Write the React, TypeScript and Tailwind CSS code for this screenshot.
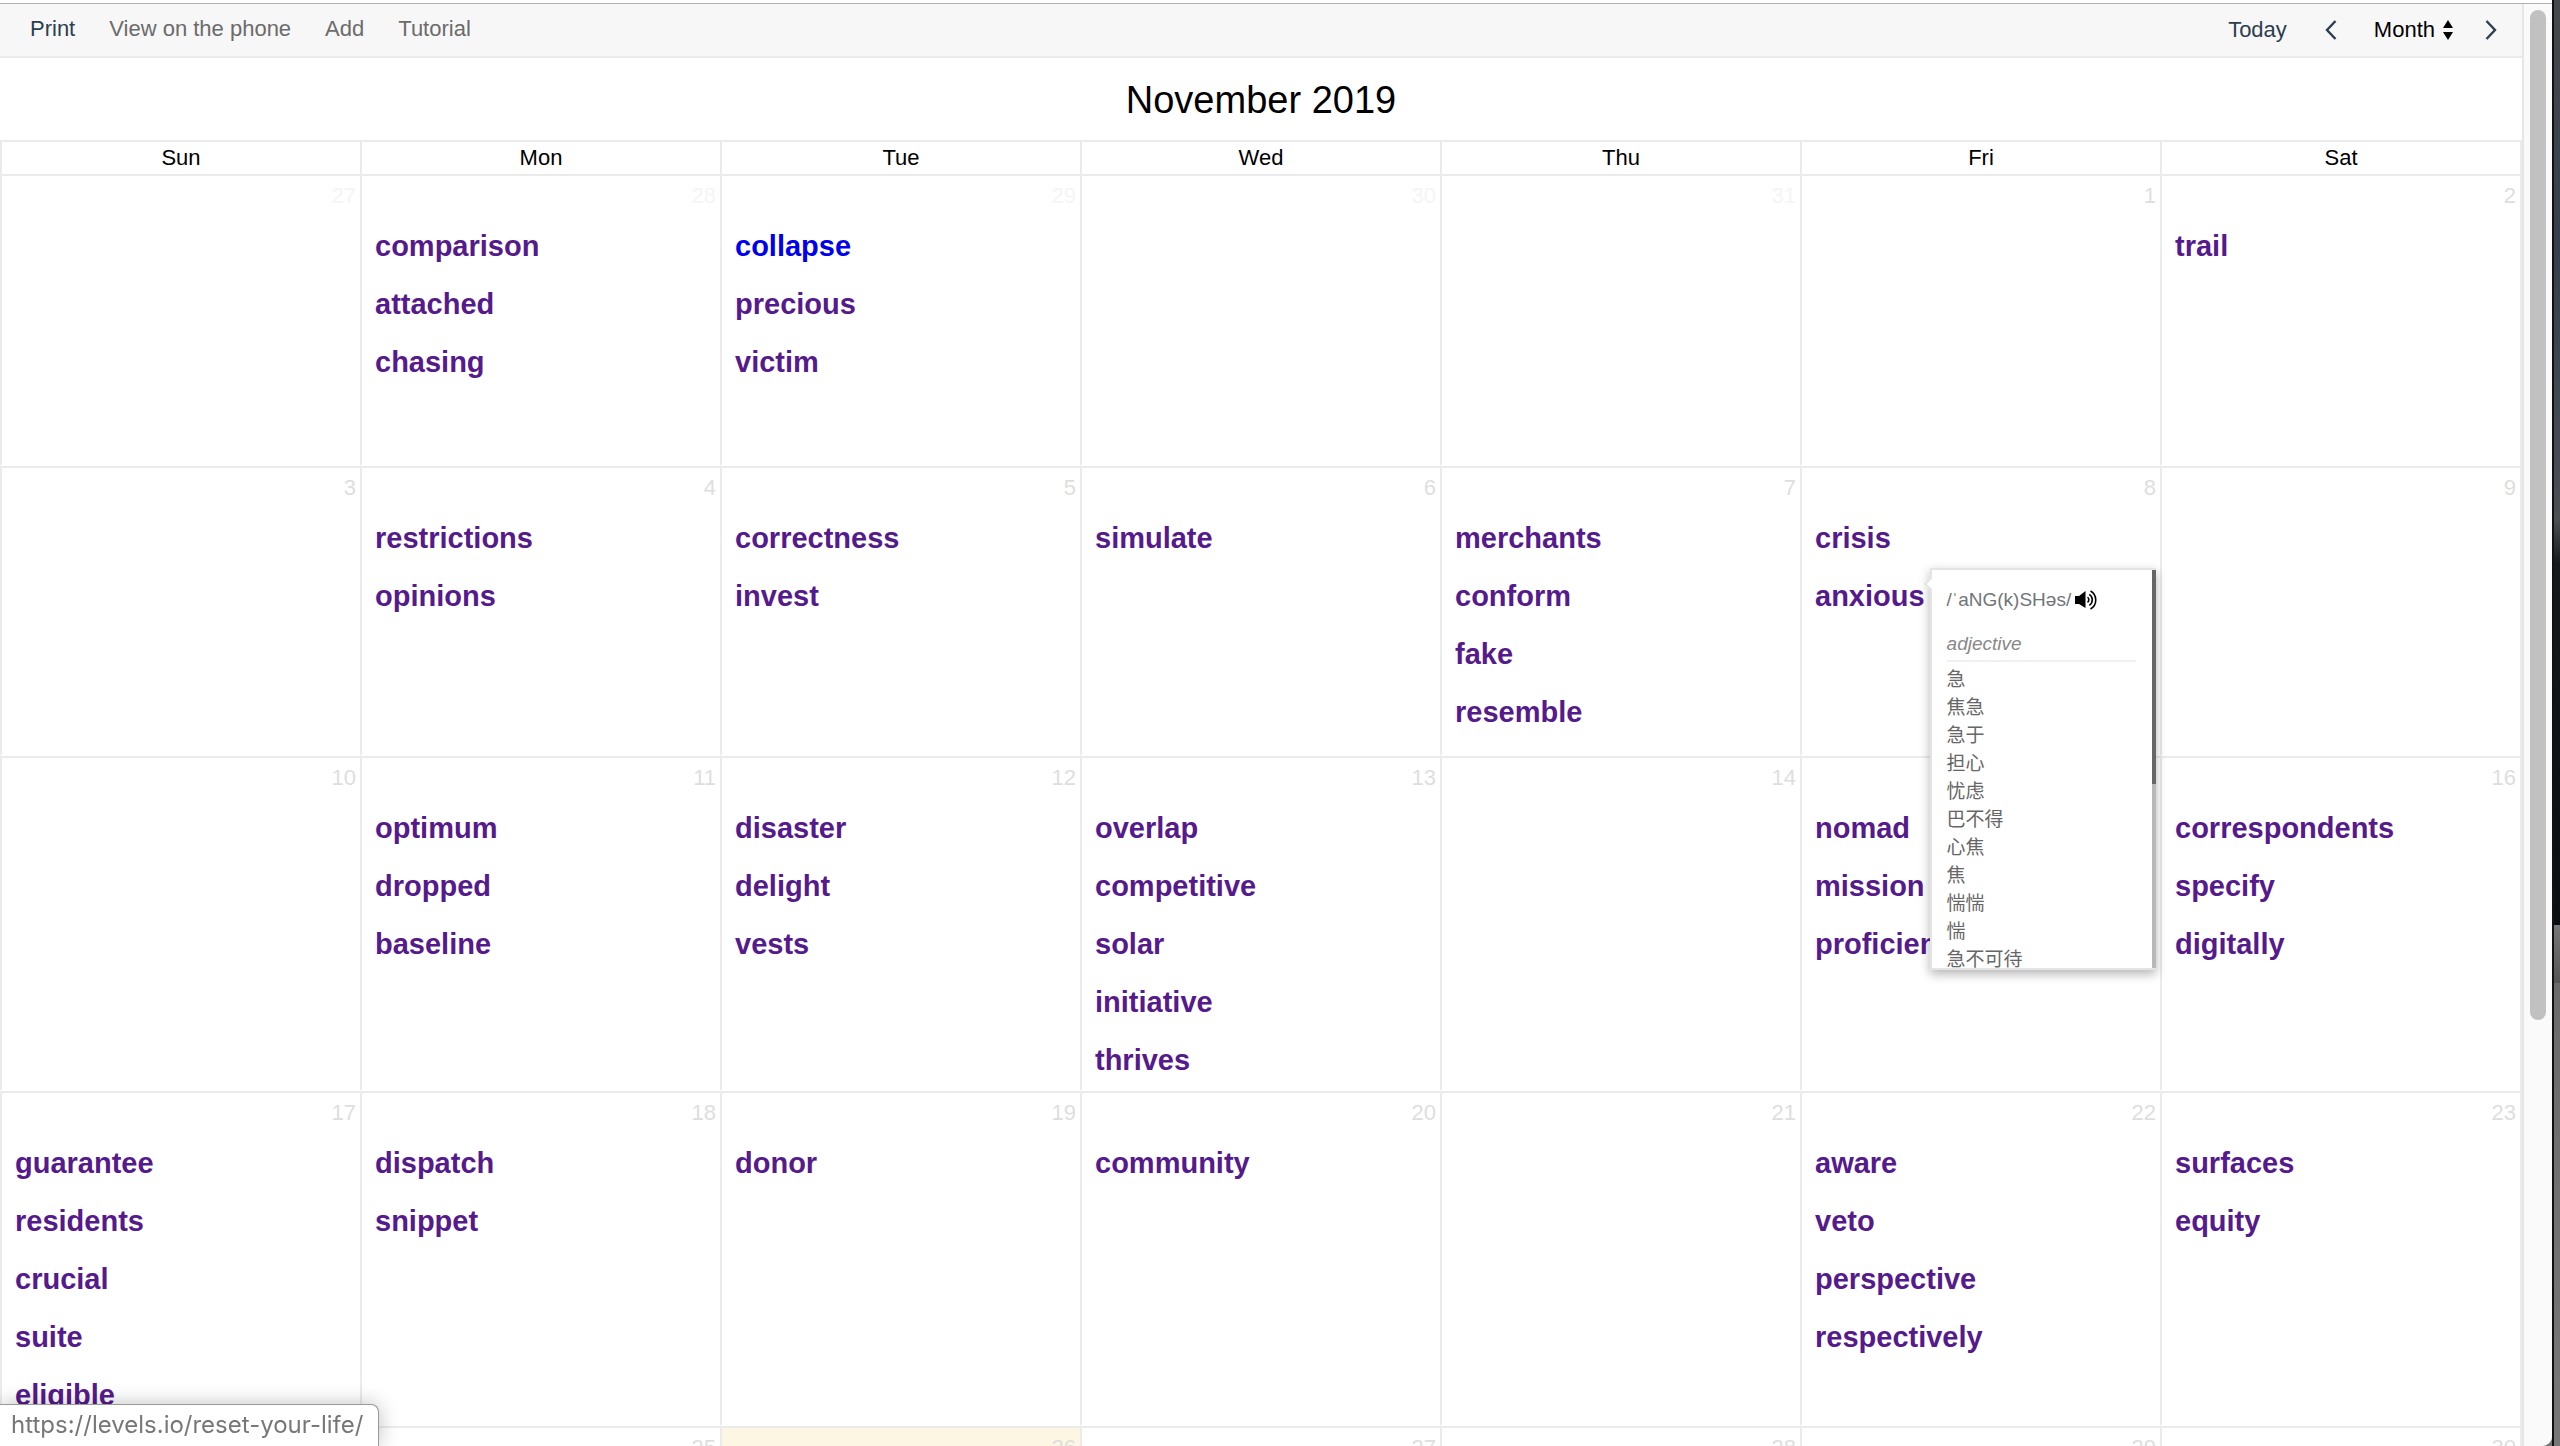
import clsx from "clsx";
import { useState } from "react";

type Day = { date: number; words?: string[]; muted?: boolean; today?: boolean };

const WEEKDAYS = ["Sun", "Mon", "Tue", "Wed", "Thu", "Fri", "Sat"];

const WEEKS: Day[][] = [
  [
    { date: 27, muted: true },
    { date: 28, muted: true, words: ["comparison", "attached", "chasing"] },
    { date: 29, muted: true, words: ["collapse", "precious", "victim"] },
    { date: 30, muted: true },
    { date: 31, muted: true },
    { date: 1 },
    { date: 2, words: ["trail"] },
  ],
  [
    { date: 3 },
    { date: 4, words: ["restrictions", "opinions"] },
    { date: 5, words: ["correctness", "invest"] },
    { date: 6, words: ["simulate"] },
    { date: 7, words: ["merchants", "conform", "fake", "resemble"] },
    { date: 8, words: ["crisis", "anxious"] },
    { date: 9 },
  ],
  [
    { date: 10 },
    { date: 11, words: ["optimum", "dropped", "baseline"] },
    { date: 12, words: ["disaster", "delight", "vests"] },
    { date: 13, words: ["overlap", "competitive", "solar", "initiative", "thrives"] },
    { date: 14 },
    { date: 15, words: ["nomad", "mission", "proficiency"] },
    { date: 16, words: ["correspondents", "specify", "digitally"] },
  ],
  [
    { date: 17, words: ["guarantee", "residents", "crucial", "suite", "eligible"] },
    { date: 18, words: ["dispatch", "snippet"] },
    { date: 19, words: ["donor"] },
    { date: 20, words: ["community"] },
    { date: 21 },
    { date: 22, words: ["aware", "veto", "perspective", "respectively"] },
    { date: 23, words: ["surfaces", "equity"] },
  ],
  [
    { date: 24 },
    { date: 25 },
    { date: 26, today: true },
    { date: 27 },
    { date: 28 },
    { date: 29 },
    { date: 30 },
  ],
];

const UNREAD = "collapse";
const ACTIVE = "anxious";

const MEANINGS = ["急", "焦急", "急于", "担心", "忧虑", "巴不得", "心焦", "焦", "惴惴", "惴", "急不可待"];

function Chevron({ d }: { d: string }) {
  return (
    <svg viewBox="0 0 12 20" className="h-5 w-3" fill="none" stroke="#2c3e50" strokeWidth="2.4">
      <path d={d} />
    </svg>
  );
}

function Toolbar() {
  const [view, setView] = useState("Month");
  return (
    <header className="flex h-[54px] items-center justify-between border-b-2 border-[#ebebeb] bg-[#f7f7f7] pr-[25px] pl-[30px] text-[22px] leading-7">
      <nav className="flex gap-[34px] pb-[2px] text-[#6b6b6b]">
        <button className="text-[#2c3e50]">Print</button>
        <a href="#phone">View on the phone</a>
        <a href="#add">Add</a>
        <a href="#tutorial">Tutorial</a>
      </nav>
      <div className="flex items-center text-[#2c3e50]">
        <button className="mr-[38px]">Today</button>
        <button aria-label="Previous" className="mr-[37px]">
          <Chevron d="M10.5 1 2 10l8.500 9" />
        </button>
        <label className="mr-8 flex items-center gap-2 text-black">
          <select
            aria-label="View"
            value={view}
            onChange={(e) => setView(e.target.value)}
            className="field-sizing-content appearance-none bg-transparent"
          >
            <option>Month</option>
            <option>Week</option>
            <option>Day</option>
          </select>
          <svg viewBox="0 0 10 20" className="h-5 w-[10px]">
            <path d="M5 0l5 8H0zM5 20l5-8H0z" />
          </svg>
        </label>
        <button aria-label="Next">
          <Chevron d="M1.500 1 10 10l-8.500 9" />
        </button>
      </div>
    </header>
  );
}

function SpeakerIcon() {
  return (
    <svg viewBox="0 0 22 20" className="h-5 w-[22px]" fill="none" stroke="#000" strokeWidth="1.600">
      <path d="M0 6h4l6.500-5v17L4 14H0z" fill="#000" stroke="none" />
      <path d="M12.500 7.200c1.800 1.200 1.800 4 0 5.200M14.300 4.300c4 2.600 4 8.300 0 11M15.500 1c7 4 7 14 0 18" />
    </svg>
  );
}

function WordPopup() {
  return (
    <div className="absolute -top-[10px] left-full z-10 ml-[5px]">
      <div className="absolute top-[11px] -left-[4px] z-10 size-[10px] rotate-45 border-b-2 border-l-2 border-[#e4e4e4] bg-white" />
      <div className="relative flex h-[402px] w-[226px] overflow-hidden border-y-2 border-l-2 border-[#e4e4e4] bg-white shadow-[0_4px_10px_rgba(0,0,0,0.3)]">
        <div className="flex-1 pt-[18px] pr-4 pl-[15px] text-[19px] font-normal text-[#707579]">
          <div className="flex items-center gap-1 whitespace-nowrap">
            <span className="leading-6">/ˈaNG(k)SHəs/</span>
            <button aria-label="Listen">
              <SpeakerIcon />
            </button>
          </div>
          <p className="mt-5 border-b-2 border-[#f0f0f0] pb-1 leading-6 text-[#888] italic">adjective</p>
          <ul className="mt-1 leading-7 text-[#666]">
            {MEANINGS.map((m) => (
              <li key={m} className="whitespace-nowrap">{m}</li>
            ))}
          </ul>
        </div>
        <div className="-my-[2px] w-1 bg-[#b8b8b8]">
          <div className="h-[216px] bg-[#666]" />
        </div>
      </div>
    </div>
  );
}

function DayCell({ day }: { day: Day }) {
  return (
    <td
      className={clsx(
        "h-[290px] border-t-2 border-b-2 border-l-2 border-[#ebebeb] border-b-white p-0 align-top",
        day.today && "bg-[#fdf6e3]"
      )}
    >
      <div
        className={clsx(
          "h-[41px] pt-[6px] pr-1 text-right text-[22px] leading-7",
          day.muted ? "text-[#f5f5f5]" : "text-[#dedede]"
        )}
      >
        {day.date}
      </div>
      <ul className="pl-[13px]">
        {day.words?.map((word) => (
          <li key={word} className="flex h-[58px] items-center text-[29px] leading-9 font-bold">
            <div className="relative">
              <a href={`#${word}`} className={word === UNREAD ? "text-[#0000ee]" : "text-[#551a8b]"}>
                {word}
              </a>
              {word === ACTIVE && <WordPopup />}
            </div>
          </li>
        ))}
      </ul>
    </td>
  );
}

export default function App() {
  return (
    <div className="flex h-screen overflow-hidden bg-[#777] font-['Liberation_Sans','Noto_Sans_CJK_SC',sans-serif]">
      <div className="flex min-w-0 flex-1 flex-col overflow-hidden rounded-br-[10px] bg-white">
        <div className="h-1 shrink-0 border-b border-[#b0b0b0]" />
        <div className="flex min-h-0 flex-1">
          <main className="min-w-0 flex-1 overflow-hidden">
            <Toolbar />
            <h1 className="pt-[19px] pb-[17px] text-center text-[38px] leading-[46px]">November 2019</h1>
            <table className="w-full table-fixed border-separate border-spacing-0 border-r-2 border-[#ebebeb]">
              <thead>
                <tr>
                  {WEEKDAYS.map((d) => (
                    <th key={d} className="h-[34px] border-t-2 border-l-2 border-[#ebebeb] p-0 text-[22px] leading-7 font-normal">
                      {d}
                    </th>
                  ))}
                </tr>
              </thead>
              <tbody>
                {WEEKS.map((week, i) => (
                  <tr key={i} className="first:h-[292px]">
                    {week.map((day) => (
                      <DayCell key={day.date} day={day} />
                    ))}
                  </tr>
                ))}
              </tbody>
            </table>
          </main>
          <div className="w-[30px] border-l-2 border-[#e6e6e6] bg-[#fafafa] pt-[6px] pl-[6px]">
            <div className="h-[1010px] w-4 rounded-full bg-[#c1c1c1]" />
          </div>
        </div>
      </div>
      {/* sliver of the desktop behind the window */}
      <div className="w-2 border-l-2 border-[#111] bg-[linear-gradient(#45494c,#35404c_17%,#4a4f54_36%,#15181c_39%,#0a0d12_64%,#777_64%,#555_68%,#6b6b6b_68%,#777_100%)]" />
      <div className="fixed bottom-0 left-0 z-20 h-[42px] rounded-tr-lg border-t border-r border-[#999] bg-white pr-[15px] pl-[11px] font-[Inter,sans-serif] text-[24px] leading-10 text-[#777] shadow-[0_0_20px_rgba(0,0,0,0.25)]">
        https://levels.io/reset-your-life/
      </div>
    </div>
  );
}
